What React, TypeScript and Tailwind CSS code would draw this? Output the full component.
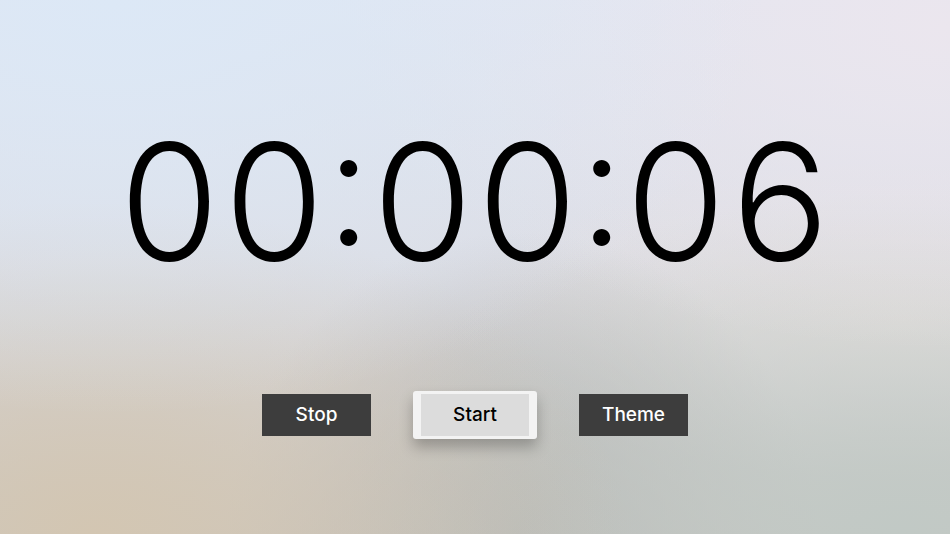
export default function App() {
  return (
    <div className="flex h-[534px] w-full flex-col items-center bg-[radial-gradient(ellipse_at_12%_0%,#dce8f6_0%,transparent_55%),radial-gradient(ellipse_at_100%_5%,#ebe6ee_0%,transparent_45%),radial-gradient(ellipse_at_10%_100%,#d3c6b2_0%,transparent_44%),radial-gradient(ellipse_at_95%_100%,#c1c9c5_0%,transparent_45%),radial-gradient(ellipse_at_55%_100%,#b6b6b4_0%,transparent_40%),radial-gradient(ellipse_at_95%_60%,#e6e1df_0%,transparent_35%),linear-gradient(180deg,#e1e6f1_0%,#dcdde4_48%,#cbc8c4_100%)] font-['Inter',sans-serif]">
      <div className="mt-[120px] text-[162px] font-light leading-none tracking-normal text-black tabular-nums">
        00:00:06
      </div>
      <div className="mt-[109px] flex items-center gap-[42px]">
        <button className="h-[42px] w-[109px] bg-[#3d3d3d] text-[19px] font-medium text-white">
          Stop
        </button>
        <div className="rounded-[3px] bg-[#f3f3f3] px-[8px] py-[3px] shadow-[0_8px_14px_rgba(0,0,0,0.25)]">
          <button className="h-[42px] w-[108px] bg-[#dcdcdc] text-[19px] font-medium text-black">
            Start
          </button>
        </div>
        <button className="h-[42px] w-[109px] bg-[#3d3d3d] text-[19px] font-medium text-white">
          Theme
        </button>
      </div>
    </div>
  );
}
